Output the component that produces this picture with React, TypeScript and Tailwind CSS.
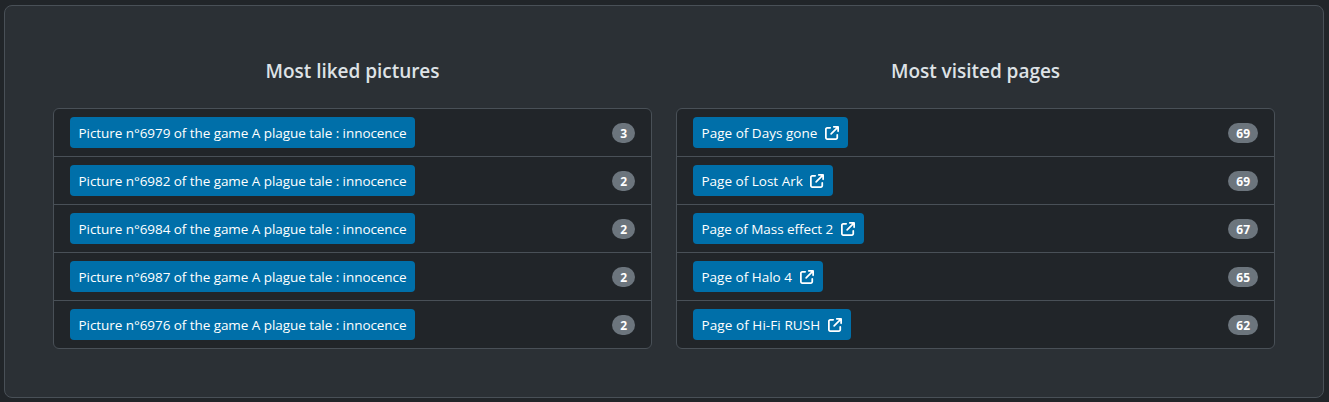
import { FaArrowUpRightFromSquare } from 'react-icons/fa6';

type Item = { label: string; count: number; width: string };

const liked: Item[] = [
  { label: 'Picture n°6979 of the game A plague tale : innocence', count: 3, width: 'w-[345px]' },
  { label: 'Picture n°6982 of the game A plague tale : innocence', count: 2, width: 'w-[345px]' },
  { label: 'Picture n°6984 of the game A plague tale : innocence', count: 2, width: 'w-[345px]' },
  { label: 'Picture n°6987 of the game A plague tale : innocence', count: 2, width: 'w-[345px]' },
  { label: 'Picture n°6976 of the game A plague tale : innocence', count: 2, width: 'w-[345px]' },
];
const visited: Item[] = [
  { label: 'Page of Days gone', count: 69, width: 'w-[155px] tracking-[0.02px]' },
  { label: 'Page of Lost Ark', count: 69, width: 'w-[140px] tracking-[0px]' },
  { label: 'Page of Mass effect 2', count: 67, width: 'w-[171px]' },
  { label: 'Page of Halo 4', count: 65, width: 'w-[130px] tracking-[0px]' },
  { label: 'Page of Hi-Fi RUSH', count: 62, width: 'w-[158px] tracking-[0.08px]' },
];

function List({ title, items, external }: { title: string; items: Item[]; external?: boolean }) {
  return (
    <section className="flex-1">
      <h2 className="mb-[25px] text-center text-[19px] leading-6 font-semibold tracking-[-0.03px]">{title}</h2>
      <ul className="divide-y divide-[#495057] overflow-hidden rounded-md border border-[#495057] bg-[#212529]">
        {items.map(({ label, count, width }) => (
          <li key={label} className="flex h-12 items-center justify-between px-4 last:h-[47px]">
            <div className="tracking-[-0.06px]">
              <button className={`flex h-[31px] items-center justify-between rounded-[4px] bg-[#006fa9] pr-[9px] pl-[8.5px] text-[13.5px] whitespace-nowrap text-white ${width}`}>
                <span className="pt-[2px]">{label}</span>
                {external && <FaArrowUpRightFromSquare className="size-[14px] shrink-0" />}
              </button>
            </div>
            <span className="rounded-full bg-[#6c757d] px-2 pt-[5px] pb-[3px] text-[12px] leading-3 font-bold text-white">{count}</span>
          </li>
        ))}
      </ul>
    </section>
  );
}

export default function App() {
  return (
    <main className="h-[402px] bg-[#212529] px-1 pt-[5px] font-['Open_Sans','Noto_Sans',sans-serif] text-[#dee2e6]">
      <div className="flex h-[393px] w-[1320px] gap-6 rounded-lg border border-[#495057] bg-[#2b3035] px-12 pt-[53px]">
        <List title="Most liked pictures" items={liked} />
        <List title="Most visited pages" items={visited} external />
      </div>
    </main>
  );
}
